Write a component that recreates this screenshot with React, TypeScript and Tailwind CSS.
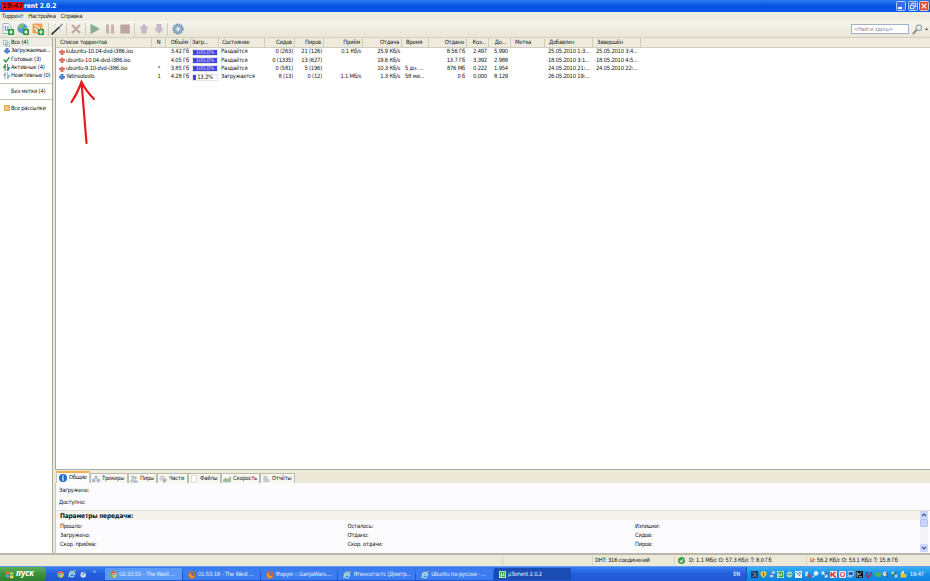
import type { ReactNode } from 'react'
import clsx from 'clsx'

interface Column {
  key: string
  title: string
  cell: string
  head?: string
}

const columns: Column[] = [
  { key: 'name', title: 'Список торрентов', cell: 'w-[96px] pl-[3px]', head: 'pl-[4px]' },
  { key: 'num', title: 'N', cell: 'w-[14px] justify-center' },
  { key: 'size', title: 'Объём', cell: 'w-[25px] justify-end pr-[2px]' },
  { key: 'done', title: 'Загр...', cell: 'w-[28px] pl-px', head: 'pl-[5px]' },
  { key: 'status', title: 'Состояние', cell: 'w-[46px] pl-[2px]', head: 'pl-[3px]' },
  { key: 'seeds', title: 'Сидов', cell: 'w-[30px] justify-end pr-[2px]' },
  { key: 'peers', title: 'Пиров', cell: 'w-[29px] justify-end pr-[2px]' },
  { key: 'down', title: 'Приём', cell: 'w-[39px] justify-end pr-[2px]' },
  { key: 'up', title: 'Отдача', cell: 'w-[39px] justify-end pr-[2px]' },
  { key: 'eta', title: 'Время', cell: 'w-[27px] pl-[3px]', head: 'pl-[4px]' },
  { key: 'sent', title: 'Отдано', cell: 'w-[38px] justify-end pr-[2px]' },
  { key: 'ratio', title: 'Коэ...', cell: 'w-[22px] justify-end pr-[2px]' },
  { key: 'avail', title: 'До...', cell: 'w-[22px] justify-end pr-[3px]', head: 'pr-[4px]' },
  { key: 'label', title: 'Метка', cell: 'w-[34px] pl-[4px]' },
  { key: 'added', title: 'Добавлен', cell: 'w-[48px] pl-[3px]', head: 'pl-[4px]' },
  { key: 'finished', title: 'Завершён', cell: 'w-[48px] pl-[3px]', head: 'pl-[4px]' },
]

const torrents: Record<string, string>[] = [
  { name: 'kubuntu-10.04-dvd-i386.iso', num: '', size: '3.42 Гб', done: '100.0', status: 'Раздаётся', seeds: '0 (263)', peers: '21 (126)', down: '0.1 Кб/s', up: '25.9 Кб/s', eta: '', sent: '8.56 Гб', ratio: '2.497', avail: '5.990', added: '25.05.2010 1:3...', finished: '25.05.2010 3:4...' },
  { name: 'ubuntu-10.04-dvd-i386.iso', num: '', size: '4.05 Гб', done: '100.0', status: 'Раздаётся', seeds: '0 (1335)', peers: '13 (627)', down: '', up: '19.6 Кб/s', eta: '', sent: '13.7 Гб', ratio: '3.392', avail: '2.988', added: '18.05.2010 3:1...', finished: '18.05.2010 4:5...' },
  { name: 'ubuntu-9.10-dvd-i386.iso', num: '*', size: '3.85 Гб', done: '100.0', status: 'Раздаётся', seeds: '0 (581)', peers: '5 (196)', down: '', up: '10.3 Кб/s', eta: '5 дн. ...', sent: '876 Мб', ratio: '0.222', avail: '1.954', added: '24.05.2010 21:...', finished: '24.05.2010 22:...' },
  { name: 'Yatinsotests', num: '1', size: '4.28 Гб', done: '13.2', status: 'Загружается', seeds: '8 (13)', peers: '0 (12)', down: '1.1 Мб/s', up: '1.3 Кб/s', eta: '58 ми...', sent: '0 б', ratio: '0.000', avail: '8.129', added: '26.05.2010 19:...', finished: '' },
]

const Svg = ({ className, box = 12, children }: { className?: string; box?: number; children: ReactNode }) => (
  <svg viewBox={`0 0 ${box} ${box}`} className={clsx('shrink-0', className)}>{children}</svg>
)

const Seeding = () => (
  <Svg className="size-[6px]">
    <path d="M6 0L9 3.5H12V8H9V12H3V8H0V3.5H3Z" fill="#dc7164" />
  </Svg>
)
const Leeching = () => (
  <Svg className="size-[6px]">
    <path d="M6 12L12 7.5V4H9V0H3V4H0V7.5Z" fill="#4f86cc" />
  </Svg>
)

const Plus = () => (
  <>
    <rect x="6" y="6" width="6" height="6" rx="1" fill="#249536" />
    <path d="M9 7V11M7 9H11" stroke="#fff" strokeWidth="1.2" />
  </>
)

const Chrome = () => (
  <Svg className="size-[7px]">
    <circle cx="6" cy="6" r="5.5" fill="#e9c233" />
    <path d="M6 .5A5.5 5.5 0 0 1 11 4H6L3.5 7L1.2 3.2A5.5 5.5 0 0 1 6 .5Z" fill="#dc4b38" />
    <path d="M1.2 3.2L4.5 8.5L5.5 11.5A5.5 5.5 0 0 1 1.2 3.2Z" fill="#4caf50" />
    <circle cx="6" cy="6" r="2.3" fill="#3f7fe0" stroke="#fff" strokeWidth=".8" />
  </Svg>
)
const Firefox = () => (
  <Svg className="size-[8px]">
    <circle cx="6" cy="6" r="5.5" fill="#d9661f" />
    <circle cx="6.5" cy="5" r="3" fill="#6b70a5" />
    <path d="M1 3L4 4L6 7L10 7.5Q8 11.5 5 11Q1 9 1 3Z" fill="#f1962e" />
  </Svg>
)
const Explorer = () => (
  <Svg className="size-[8px]">
    <path d="M9.5 8.2A4 4 0 1 1 10 6H3" fill="none" stroke="#9bdcff" strokeWidth="2" />
    <path d="M1 11Q0 8 5 4T11.5 1" fill="none" stroke="#e8ce6a" strokeWidth="1.3" />
  </Svg>
)
const MicroTorrent = () => (
  <Svg className="size-[7px]">
    <rect width="12" height="12" rx="1" fill="#f2fff0" />
    <rect x="1.2" y="1.2" width="9.6" height="9.6" fill="#2f9d3c" />
    <path d="M4 10V3M4 6Q4 8 6 8T8 6V3M8 7L9.5 8" fill="none" stroke="#fff" strokeWidth="1.5" />
  </Svg>
)

function TitleBar() {
  return (
    <div className="flex h-[12px] items-center bg-linear-to-b from-[#2c7bf2] via-[#0550dd] to-[#0a5bf0] text-white">
      <div className="ml-px flex h-[8px] w-[23px] items-center justify-center bg-[#f20d12] font-['DejaVu_Sans'] text-[7px] font-bold tracking-[-0.3px] text-[#4a0508]">
        19:47
      </div>
      <span className="font-['DejaVu_Sans_Condensed','DejaVu_Sans',sans-serif] text-[6.7px] font-bold tracking-[-0.1px]">rent 2.0.2</span>
      <div className="ml-auto flex gap-[1.5px] pr-px">
        <div className="flex h-[10px] w-[10px] items-end rounded-[1.5px] border border-[#b5cbf7] bg-[#3a6fe6] p-[1px]">
          <div className="h-[2px] w-[4px] bg-white" />
        </div>
        <div className="size-[10px] rounded-[1.5px] border border-[#b5cbf7] bg-[#3a6fe6]">
          <Svg className="size-[8px]">
            <path d="M4 4V2H10V7H8M2 5H7.5V10H2Z" fill="none" stroke="#fff" strokeWidth="1.3" />
          </Svg>
        </div>
        <div className="size-[10px] rounded-[1.5px] border border-[#f0c4b8] bg-[#dd5130]">
          <Svg className="size-[8px]">
            <path d="M2.5 2.5L9.5 9.5M9.5 2.5L2.5 9.5" stroke="#fff" strokeWidth="1.9" />
          </Svg>
        </div>
      </div>
    </div>
  )
}

const ToolSep = () => <div className="h-[13px] w-px shrink-0 bg-[#d0cdbd]" />

function Toolbar() {
  return (
    <div className="flex h-[17px] items-center border-b border-[#d3d0c0] bg-linear-to-b from-[#f6f5ee] to-[#e9e6d7] pl-[2px]">
      <div className="flex items-center gap-[3px]">
        <Svg className="size-[12px]">
          <path d="M1 .5H6.5L9 3V10.5H1Z" fill="#f3f8fc" stroke="#86a9c4" strokeWidth=".8" />
          <path d="M3.5 3V7Q5.5 8.5 6 5V3" fill="none" stroke="#57a7a9" strokeWidth="1.2" />
          <Plus />
        </Svg>
        <Svg className="size-[12px]">
          <circle cx="5.5" cy="5.5" r="5" fill="#4d9ed0" />
          <path d="M1 4Q3 0 7 1L6 4L3 6ZM6 6L10 4V8L7 10Z" fill="#83bf73" />
          <Plus />
        </Svg>
        <Svg className="size-[12px]">
          <rect x=".5" y=".5" width="10" height="10" rx="1" fill="#eda04b" />
          <path d="M2 2.5Q8 2.5 8 9M2 5.5Q5 5.5 5 9" fill="none" stroke="#fff" strokeWidth="1.2" />
          <Plus />
        </Svg>
      </div>
      <div className="ml-[4px] flex items-center">
        <ToolSep />
        <Svg className="ml-[2px] size-[12px]">
          <path d="M.5 11.5L8.5 4" stroke="#2d3338" strokeWidth="1.6" />
          <path d="M8.5 4L11.5 1" stroke="#86939c" strokeWidth="1.6" />
          <path d="M3 2H5M4 1V3M9 6V8M8 7H10" stroke="#b8c3c8" strokeWidth=".6" />
        </Svg>
        <div className="mx-[3px]"><ToolSep /></div>
        <Svg className="size-[12px]">
          <path d="M2 2L10 10M10 2L2 10" stroke="#bfa8a6" strokeWidth="2.2" />
        </Svg>
        <div className="mr-[3px] ml-[3px]"><ToolSep /></div>
      </div>
      <div className="flex items-center gap-[3px]">
        <Svg className="size-[12px]"><path d="M1.5 .8L11 6L1.5 11.2Z" fill="#86ad96" /></Svg>
        <Svg className="size-[12px]"><path d="M2 1.5H5V10.5H2ZM7 1.5H10V10.5H7Z" fill="#c8b2af" /></Svg>
        <Svg className="size-[12px]"><rect x="1.3" y="1.5" width="9.5" height="9" rx=".6" fill="#bda4a1" /></Svg>
      </div>
      <div className="ml-[3px] flex items-center">
        <ToolSep />
        <Svg className="ml-[3px] size-[12px]"><path d="M6 .7L11 6H8.5V10.5H3.5V6H1Z" fill="#c6b8c8" /></Svg>
        <Svg className="ml-[3px] size-[12px]"><path d="M6 10.7L1 5.5H3.5V1H8.5V5.5H11Z" fill="#c6b8c8" /></Svg>
        <div className="mr-[4px] ml-[2px]"><ToolSep /></div>
        <Svg className="size-[12px]">
          <circle cx="6" cy="6" r="4.7" fill="none" stroke="#7295b5" strokeWidth="1.8" strokeDasharray="1.8 .66" />
          <circle cx="6" cy="6" r="3.6" fill="#a3bfd6" stroke="#7898b7" />
          <circle cx="6" cy="6" r="1.5" fill="#eef1f0" />
        </Svg>
      </div>
      <div className="ml-auto flex items-center pr-[2px]">
        <div className="flex h-[10px] w-[58px] items-center border border-[#9db4cc] bg-white pt-px pl-[2px] text-[5.6px] text-[#7d899b]">&lt;Найти здесь&gt;</div>
        <Svg className="ml-[3px] size-[11px]">
          <path d="M1 11L5 6.5" stroke="#8d8d72" strokeWidth="2" />
          <circle cx="7.5" cy="4" r="3" fill="#e4f0f0" stroke="#91a19a" strokeWidth="1.1" />
        </Svg>
        <Svg className="ml-[2px] size-[3px]"><path d="M0 3H12L6 10Z" fill="#222" /></Svg>
      </div>
    </div>
  )
}

function Sidebar() {
  return (
    <div className="flex w-[53px] shrink-0 flex-col border-r border-[#aaa99d] bg-white">
      <div className="flex h-[9px] items-center gap-px bg-[#efede3] pt-px pl-[3px]">
        <Svg className="size-[7px]">
          <path d="M1 1H7V8H1ZM4 4H11V11H4Z" fill="#fff" stroke="#75a8c2" strokeWidth="1.2" />
          <path d="M6 7H9V9H6Z" fill="#65ae79" />
        </Svg>
        Все (4)
      </div>
      <div className="flex h-[8.4px] items-center gap-px pl-[4px] tracking-[-0.25px]"><Leeching />Загружаемые...</div>
      <div className="flex h-[8.2px] items-center gap-px pl-[3px]">
        <Svg className="size-[7px]"><path d="M1 6L5 10L11 2" fill="none" stroke="#35953e" strokeWidth="2.4" /></Svg>
        Готовые (3)
      </div>
      <div className="flex h-[8.4px] items-center gap-px pl-[3px]">
        <Svg className="size-[7px]">
          <path d="M3.5 12V6H1L4 1V6" stroke="#37964a" strokeWidth="1.8" fill="#37964a" />
          <path d="M8 0V6H11.5L8 12V6" stroke="#347ea8" strokeWidth="1.6" fill="#347ea8" />
        </Svg>
        Активные (4)
      </div>
      <div className="flex h-[8px] items-center gap-px pl-[3px] tracking-[-0.25px]">
        <Svg className="size-[7px]">
          <path d="M3.5 12V6H1L4 1V6M8 0V6H11.5L8 12V6" stroke="#8fa9bd" strokeWidth="1.6" fill="#9eb5c8" />
        </Svg>
        Неактивные (0)
      </div>
      <div className="mt-[3px] flex h-[17px] items-center border-y border-[#c5c4ba] pt-px pl-[11px]">Без метки (4)</div>
      <div className="mt-[4px] flex h-[9px] items-center gap-px pl-[4px] tracking-[-0.25px]">
        <Svg className="size-[6px]">
          <rect width="12" height="12" rx="1" fill="#e7ad55" />
          <path d="M2 3Q9 3 9 10M2 6Q6 6 6 10" fill="none" stroke="#fff3d8" strokeWidth="1.3" />
        </Svg>
        Все рассылки
      </div>
    </div>
  )
}

function Progress({ value }: { value: string }) {
  const full = value === '100.0'
  return (
    <div className="grid h-[7px] w-[26px] border border-[#e3e3ee] *:col-start-1 *:row-start-1">
      <div className="h-[5px] bg-[#4446d8]" style={{ width: `${value}%` }} />
      <span className={clsx('text-center leading-[5px]', full ? 'text-[#cfccff]' : 'text-[#222]')}>{value}%</span>
    </div>
  )
}

function TorrentList() {
  return (
    <div className="h-[432px] border-b border-l border-[#a8a89d] bg-white">
      <div className="flex h-[10px] border-b border-[#d0cdbc] bg-[#eeebdc]">
        {columns.map((col) => (
          <div key={col.key} className={clsx('flex shrink-0 items-center border-r border-[#cfccbb] pt-px', col.cell, col.head)}>
            {col.title}
          </div>
        ))}
      </div>
      {torrents.map((row, i) => (
        <div key={row.name} className="flex h-[8.3px] items-center">
          {columns.map((col) => (
            <div key={col.key} className={clsx('flex shrink-0 items-center', col.cell)}>
              {col.key === 'name' && <span className="mr-px">{i < 3 ? <Seeding /> : <Leeching />}</span>}
              {col.key === 'done' ? <Progress value={row.done} /> : row[col.key]}
            </div>
          ))}
        </div>
      ))}
    </div>
  )
}

const peopleIcon = (
  <>
    <circle cx="4" cy="3" r="2.3" fill="#b0bfae" />
    <path d="M0 11Q0 6 4 6T8 11Z" fill="#b9c8b9" />
    <circle cx="8" cy="4" r="2.3" fill="#a9b9cb" />
    <path d="M4 12Q4 7 8 7T12 12Z" fill="#b8c5d3" />
  </>
)

const tabs: { label: string; width: string; icon: ReactNode }[] = [
  { label: 'Трекеры', width: 'w-[38px]', icon: <><path d="M4 1H8V6H4ZM0 6H5V11H0ZM7 6H12V11H7Z" fill="#a9bbd0" /></> },
  { label: 'Пиры', width: 'w-[29px]', icon: peopleIcon },
  { label: 'Части', width: 'w-[31px]', icon: <><circle cx="5" cy="5" r="4.5" fill="#d2d4d8" /><path d="M6 6H11.5A5 5 0 0 1 6 11.5Z" fill="#c8a8a8" /></> },
  { label: 'Файлы', width: 'w-[33px]', icon: <path d="M2 1H10V11H2Z" fill="#fff" stroke="#c4ccd2" /> },
  { label: 'Скорость', width: 'w-[39px]', icon: <path d="M0 11V7L4 4L7 6L12 1V11Z" fill="#a5bc9d" /> },
  { label: 'Отчёты', width: 'w-[35px]', icon: <path d="M2 1H8V11H2ZM6 6H11V11H6Z" fill="#c4cbd0" /> },
]

function DetailTabs() {
  return (
    <div className="flex h-[13px] items-end bg-[#ece9d8] pl-[1px]">
      <div className="flex h-[12px] w-[34px] items-center gap-[2px] rounded-t-[1px] border-x border-t-2 border-x-[#c9c7ba] border-t-[#f0b04a] bg-[#fcfcfa] pl-[2px]">
        <Svg className="size-[8px]">
          <circle cx="6" cy="6" r="6" fill="#2e68c7" />
          <path d="M6 2V4M6 5V10" stroke="#fff" strokeWidth="1.8" />
        </Svg>
        Общие
      </div>
      {tabs.map((tab) => (
        <div key={tab.label} className={clsx('flex h-[10px] shrink-0 items-center gap-[2px] border border-b-0 border-[#bcbbae] bg-[#f8f7f2] pl-[1px]', tab.width)}>
          <Svg className="size-[8px]">{tab.icon}</Svg>
          {tab.label}
        </div>
      ))}
    </div>
  )
}

const details = [
  ['Прошло:', 'Осталось:', 'Излишки:'],
  ['Загружено:', 'Отдано:', 'Сидов:'],
  ['Скор. приёма:', 'Скор. отдачи:', 'Пиров:'],
]

function Details() {
  return (
    <div className="flex h-[70px] flex-col border-l border-[#c9c8be] bg-[#fcfcfe]">
      <div className="flex h-[28px] flex-col gap-[4px] border-b border-[#deded6] pt-[3px] pl-[3px]">
        <div className="leading-[8px]">Загружено:</div>
        <div className="leading-[8px]">Доступно:</div>
      </div>
      <div className="flex flex-1">
        <div className="min-w-0 flex-1">
          <div className="flex h-[9px] items-center bg-[#f4f3ec] pt-px pl-[4px] font-['DejaVu_Sans_Condensed','DejaVu_Sans',sans-serif] text-[6.6px] font-bold">
            Параметры передачи:
          </div>
          <div className="flex flex-col pt-[2px]">
            {details.map((row) => (
              <div key={row[0]} className="grid h-[9.2px] grid-cols-[287.5px_287.5px_1fr] items-center pl-[4px]">
                {row.map((label) => <div key={label}>{label}</div>)}
              </div>
            ))}
          </div>
        </div>
        <div className="mr-[2px] flex w-[8px] shrink-0 flex-col bg-[#f4f4fb] pb-px">
          <Svg className="size-[8px]"><rect width="12" height="12" rx="1.5" fill="#c8d6fb" /><path d="M3 7.5L6 4.5L9 7.5" fill="none" stroke="#40588e" strokeWidth="1.8" /></Svg>
          <div className="h-[8px] rounded-[1px] border border-[#b0c4f5] bg-[#c8d6fb]" />
          <Svg className="mt-auto size-[8px]"><rect width="12" height="12" rx="1.5" fill="#c8d6fb" /><path d="M3 4.5L6 7.5L9 4.5" fill="none" stroke="#40588e" strokeWidth="1.8" /></Svg>
        </div>
      </div>
    </div>
  )
}

function StatusBar() {
  return (
    <div className="flex h-[13px] items-center border-t-2 border-[#b8b7a9] bg-[#ece9d8]">
      <div className="h-[9px] w-[503px] border-r border-[#d5d2c2]" />
      <div className="h-[9px] w-[90px] border-r border-[#d5d2c2]" />
      <div className="flex h-[9px] w-[82px] items-center border-r border-[#d5d2c2] pl-[2px]">DHT: 316 соединений</div>
      <div className="flex h-[9px] w-[132px] items-center gap-[4px] border-r border-[#d5d2c2] pl-[3px] tracking-[-0.15px]">
        <Svg className="size-[7px]">
          <circle cx="6" cy="6" r="6" fill="#3a9e46" />
          <path d="M3 6L5.5 8.5L9 4" fill="none" stroke="#fff" strokeWidth="1.8" />
        </Svg>
        D: 1.1 Мб/с O: 57.3 Кб/с T: 8.0 Гб
      </div>
      <div className="pl-[3px] tracking-[-0.15px]">U: 56.2 Кб/с O: 53.1 Кб/с T: 15.8 Гб</div>
    </div>
  )
}

const windows = [
  { title: '02:33:55 - The West ...', Icon: Chrome, tone: 'bg-[#5a9bf8]' },
  { title: '01:55:18 - The West ...', Icon: Firefox, tone: 'bg-[#3b7df0]' },
  { title: 'Форум :: GanjaWars....', Icon: Firefox, tone: 'bg-[#3b7df0]' },
  { title: 'Ятинсотэстс (Дмитр...', Icon: Explorer, tone: 'bg-[#3b7df0]' },
  { title: 'Ubuntu по-русски - ...', Icon: Explorer, tone: 'bg-[#3b7df0]' },
  { title: 'µTorrent 2.0.2', Icon: MicroTorrent, tone: 'bg-[#1b4cb4]' },
]

const tray: ReactNode[] = [
  <><rect width="12" height="12" fill="#1d3b62" /><path d="M2 3H6V9H2M8 3V9H11" stroke="#89a8c8" fill="none" /></>,
  <><path d="M6 0L11 2V7L6 12L1 7V2Z" fill="#efc83f" /><path d="M6 3V8" stroke="#735915" strokeWidth="2" /></>,
  <path d="M4 0H11V5H4ZM1 6H8V11H1Z" fill="#b9dcfa" stroke="#3867a3" />,
  <><rect width="12" height="12" fill="#f2fff0" /><rect x="1" y="1" width="10" height="10" fill="#2f9d3c" /><path d="M3 10V3M3 7H8V3" stroke="#fff" strokeWidth="1.5" fill="none" /></>,
  <><circle cx="6" cy="6" r="5" fill="#aed7bd" /><path d="M1 7Q6 2 11 7" fill="#49a166" /></>,
  <><rect width="12" height="12" fill="#e9edf2" /><path d="M2 2L9 9M6 3H9V6" stroke="#466780" strokeWidth="1.5" fill="none" /></>,
  <><path d="M2 1H7V9H2Z" fill="#cbdcf1" /><path d="M6 6L11 11M11 6L6 11" stroke="#d43b32" strokeWidth="2" /></>,
  <><circle cx="7" cy="4" r="4" fill="#e4eef9" /><path d="M1 11L5 7" stroke="#c8ddf8" strokeWidth="2" /></>,
  <><path d="M1 1H6V6H1ZM6 6H11V11H6Z" fill="#e4edf6" /><path d="M7 1L10 4L4 11" stroke="#445c7b" strokeWidth="1.5" fill="none" /></>,
  <><rect width="12" height="12" fill="#f1dfdc" /><path d="M2 2V10M9 2L4 6L10 11" stroke="#cf3e36" strokeWidth="2.5" fill="none" /></>,
  <><rect width="12" height="12" rx="2" fill="#f1e6ef" /><circle cx="6" cy="6" r="3.5" fill="none" stroke="#d45e74" strokeWidth="2" /></>,
  <path d="M2 1H11V8H2ZM0 10H9" fill="#1c5eac" stroke="#c6e4ff" strokeWidth="1.5" />,
  <><rect width="12" height="12" fill="#0d151c" /><path d="M2 11V2L5 7L9 2M5 10H10" stroke="#b5d2dc" strokeWidth="1.5" fill="none" /></>,
  <><path d="M1 6L5 11L12 2" stroke="#a62f4b" strokeWidth="3" fill="none" /><path d="M1 3H6" stroke="#6c2c47" strokeWidth="2" /></>,
  <path d="M0 6L4 2H12V10H4Z" fill="#51b457" />,
  <><circle cx="5" cy="5" r="4" fill="#c6cfda" /><path d="M7 3Q12 7 7 11" stroke="#495b72" strokeWidth="2" fill="none" /></>,
  <><path d="M1 1H6V6H1ZM6 6H11V11H6Z" fill="#b9d4ce" /><path d="M2 9L9 2" stroke="#287c5e" strokeWidth="3" /></>,
  <><path d="M1 3H5L6 5H11V11H1Z" fill="#ebc13c" /><path d="M3 0H7V5H3Z" fill="#f5e08d" /></>,
]

function Taskbar() {
  return (
    <div className="flex h-[15px] items-stretch border-t border-[#639bf5] bg-linear-to-b from-[#3a80f0] via-[#245ddb] to-[#2056d0] text-white">
      <div className="flex w-[46px] items-center gap-[2px] rounded-r-[4px] bg-linear-to-b from-[#5fac58] via-[#3c923a] to-[#2f7e2f] pl-[5px]">
        <Svg className="size-[9px]">
          <path d="M1 2Q3 1 5.5 2V5.5Q3 4.5 1 5.5Z" fill="#f36b35" />
          <path d="M6.5 2.5Q9 3.5 11 2.5V6Q9 7 6.5 6Z" fill="#a0dd59" />
          <path d="M1 6.5Q3 5.5 5.5 6.5V10Q3 9 1 10Z" fill="#699df0" />
          <path d="M6.5 7Q9 8 11 7V10.5Q9 11.5 6.5 10.5Z" fill="#ffdb4b" />
        </Svg>
        <span className="font-['DejaVu_Sans_Condensed','DejaVu_Sans',sans-serif] text-[8px] font-bold italic">пуск</span>
      </div>
      <div className="flex w-[58px] items-center gap-[4px] pl-[11px] text-[5px]">
        <Chrome />
        <Explorer />
        <Svg className="size-[7px]"><rect x="1" y="2" width="9" height="9" rx="3" fill="#d5e5f6" /><path d="M4 7L10 1" stroke="#547caf" strokeWidth="2" /></Svg>
        <span className="-mt-[5px] ml-[2px]">»</span>
      </div>
      <div className="flex items-center gap-[1px] pl-[1px]">
        {windows.map(({ title, Icon, tone }) => (
          <div key={title} className={clsx('flex h-[12px] w-[76.8px] items-center gap-[2px] rounded-[1.5px] pt-px pl-[5px] text-[5.9px] text-[#e4eeff]', tone)}>
            <Icon />
            {title}
          </div>
        ))}
      </div>
      <div className="ml-auto flex items-center pt-px pr-[6px] text-[5.8px]">EN</div>
      <div className="flex w-[184px] items-center border-l border-[#1059b8] bg-linear-to-b from-[#39b0f4] via-[#1391eb] to-[#0f82dc] pl-[4px] text-[5.9px]">
        <div className="flex gap-[1.75px]">
          {tray.map((icon, i) => <Svg key={i} className="size-[7px]">{icon}</Svg>)}
        </div>
        <span className="ml-auto pt-px pr-[6px]">19:47</span>
      </div>
    </div>
  )
}

export default function App() {
  return (
    <div className="relative flex h-[581px] w-[930px] flex-col overflow-hidden bg-[#ece9d8] font-['DejaVu_Sans_Condensed','DejaVu_Sans',sans-serif] text-[5.8px] leading-none tracking-[-0.2px] whitespace-nowrap text-[#161616]">
      <TitleBar />
      <div className="flex h-[9px] items-center gap-[5px] bg-[#efede1] pt-px pl-[2px]">
        <span>Торрент</span>
        <span>Настройка</span>
        <span>Справка</span>
      </div>
      <Toolbar />
      <div className="flex h-[515px]">
        <Sidebar />
        <div className="ml-[2px] flex min-w-0 flex-1 flex-col">
          <TorrentList />
          <DetailTabs />
          <Details />
        </div>
      </div>
      <StatusBar />
      <Taskbar />
      {/* hand-drawn pointer to the last torrent */}
      <svg viewBox="0 0 30 66" className="absolute top-[79px] left-[68px] h-[66px] w-[30px]">
        <path d="M18.5 64L13.5 3M3.5 23Q9 15 13.5 3Q18 12 26 20" fill="none" stroke="#e51b1e" strokeWidth="2.2" strokeLinecap="round" />
      </svg>
    </div>
  )
}
